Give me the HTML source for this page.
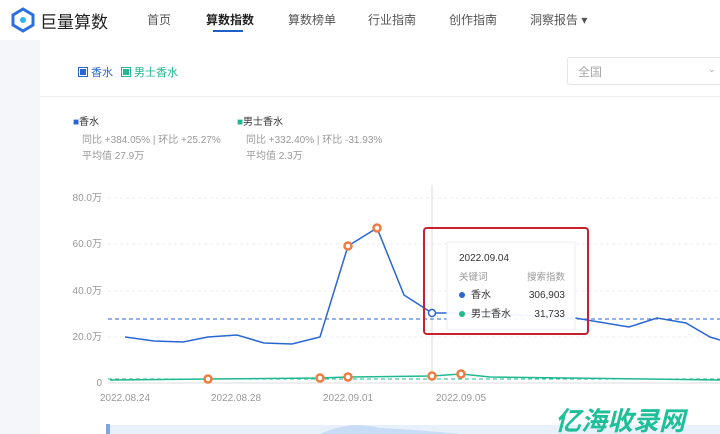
<!DOCTYPE html><html><head><meta charset="utf-8"><style>
body{margin:0;width:720px;height:434px;overflow:hidden;background:#fff;font-family:"Liberation Sans","Noto Sans CJK SC",sans-serif;position:relative}
.a{position:absolute;white-space:nowrap}
.nav{font-size:12px;color:#555;top:11px}
.sq{display:inline-block;width:8px;height:8px;border:1px solid;margin-right:3px;vertical-align:-1px}
</style></head><body>
<div class="a" style="left:0;top:40px;width:40px;height:394px;background:#f4f6f9"></div>
<svg class="a" style="left:10px;top:7px" width="26" height="26" viewBox="0 0 26 26"><path d="M13 2 L23 8 L23 18 L13 24 L3 18 L3 8Z" fill="none" stroke="#2c6fe0" stroke-width="3"/><circle cx="13" cy="13" r="3" fill="#2fb6e8"/></svg>
<div class="a" style="left:40px;top:8px;font-size:17px;color:#222">巨量算数</div>
<div class="a nav" style="left:147px">首页</div>
<div class="a nav" style="left:206px;color:#222;font-weight:bold">算数指数</div>
<div class="a" style="left:213px;top:30px;width:30px;height:2px;background:#1f5fc9"></div>
<div class="a nav" style="left:288px">算数榜单</div>
<div class="a nav" style="left:368px">行业指南</div>
<div class="a nav" style="left:449px">创作指南</div>
<div class="a nav" style="left:530px">洞察报告 ▾</div>
<div class="a" style="left:40px;top:96px;width:680px;height:1px;background:#eef0f3"></div>
<div class="a" style="left:78px;top:64px;font-size:11px;color:#2a66d2"><span class="sq" style="background:#2a66d2;box-shadow:inset 0 0 0 1px #fff"></span>香水</div>
<div class="a" style="left:121px;top:64px;font-size:11px;color:#1fb891"><span class="sq" style="background:#1fb891;box-shadow:inset 0 0 0 1px #fff"></span>男士香水</div>
<div class="a" style="left:567px;top:57px;width:160px;height:26px;border:1px solid #e3e6ea;border-radius:3px"></div>
<div class="a" style="left:578px;top:63px;font-size:12px;color:#aaa">全国</div>
<div class="a" style="left:708px;top:64px;font-size:9px;color:#aaa">⌄</div>
<div class="a" style="left:73px;top:113px;font-size:10px;color:#333"><span style="color:#2a66d2">■</span>香水</div>
<div class="a" style="left:82px;top:131px;font-size:10px;color:#999">同比 +384.05% | 环比 +25.27%</div>
<div class="a" style="left:82px;top:147px;font-size:10px;color:#999">平均值 27.9万</div>
<div class="a" style="left:237px;top:113px;font-size:10px;color:#333"><span style="color:#1fb891">■</span>男士香水</div>
<div class="a" style="left:246px;top:131px;font-size:10px;color:#999">同比 +332.40% | 环比 -31.93%</div>
<div class="a" style="left:246px;top:147px;font-size:10px;color:#999">平均值 2.3万</div>
<svg class="a" style="left:0;top:0" width="720" height="434">
<g stroke="#eceef1" stroke-dasharray="3 3"><line x1="108" y1="198" x2="720" y2="198"/><line x1="108" y1="244" x2="720" y2="244"/><line x1="108" y1="291" x2="720" y2="291"/><line x1="108" y1="337" x2="720" y2="337"/></g>
<line x1="108" y1="383" x2="720" y2="383" stroke="#ddd"/>
<g font-size="10" fill="#999" text-anchor="end"><text x="102" y="201">80.0万</text><text x="102" y="247">60.0万</text><text x="102" y="294">40.0万</text><text x="102" y="340">20.0万</text><text x="102" y="386">0</text></g>
<g font-size="10" fill="#999" text-anchor="middle"><text x="125" y="401">2022.08.24</text><text x="236" y="401">2022.08.28</text><text x="348" y="401">2022.09.01</text><text x="461" y="401">2022.09.05</text></g>
<line x1="432" y1="185" x2="432" y2="383" stroke="#ddd"/>
<line x1="108" y1="319" x2="720" y2="319" stroke="#2a66d2" stroke-dasharray="4 3"/>
<line x1="108" y1="379" x2="720" y2="379" stroke="#1fb891" stroke-dasharray="4 3"/>
<polyline fill="none" stroke="#2a66d2" stroke-width="1.5" points="125,337 154,341 183,342 208,337 237,335 264,343 292,344 320,337 348,246 377,228 404,295 432,313 461,313 500,314 575,318 629,327 657,318 686,323 710,337 720,340"/>
<polyline fill="none" stroke="#1fb891" stroke-width="1.5" points="110,380 208,379 320,378 348,377 432,376 461,374 490,377 720,380"/>
<g fill="#fff" stroke="#f07b3f" stroke-width="2.5"><circle cx="348" cy="246" r="3.5"/><circle cx="377" cy="228" r="3.5"/><circle cx="208" cy="379" r="3.5"/><circle cx="320" cy="378" r="3.5"/><circle cx="348" cy="377" r="3.5"/><circle cx="432" cy="376" r="3.5"/><circle cx="461" cy="374" r="3.5"/></g>
<circle cx="432" cy="313" r="3.5" fill="#fff" stroke="#2a66d2" stroke-width="1.5"/>
<rect x="447" y="242" width="128" height="88" fill="#fff" fill-opacity="0.93" stroke="#eee"/>
<rect x="424" y="228" width="164" height="106" rx="3" fill="none" stroke="#c8202f" stroke-width="2"/>
<text x="459" y="261" font-size="10" fill="#333">2022.09.04</text>
<text x="459" y="280" font-size="9.5" fill="#999">关键词</text><text x="565" y="280" font-size="9.5" fill="#999" text-anchor="end">搜索指数</text>
<circle cx="462" cy="295" r="3" fill="#2a66d2"/><text x="471" y="298" font-size="10" fill="#333">香水</text><text x="565" y="298" font-size="10" fill="#333" text-anchor="end">306,903</text>
<circle cx="462" cy="314" r="3" fill="#1fb891"/><text x="471" y="317" font-size="10" fill="#333">男士香水</text><text x="565" y="317" font-size="10" fill="#333" text-anchor="end">31,733</text>
<rect x="108" y="425" width="612" height="9" fill="#e8f0fb"/>
<path d="M320 434 Q350 420 380 428 Q420 430 460 434Z" fill="#c9dcf5"/>
<rect x="106" y="424" width="4" height="10" fill="#7fa6e0"/>
<text x="555" y="430" font-size="26" font-weight="bold" fill="#1fbf9a" font-style="italic">亿海收录网</text>
</svg>
</body></html>
